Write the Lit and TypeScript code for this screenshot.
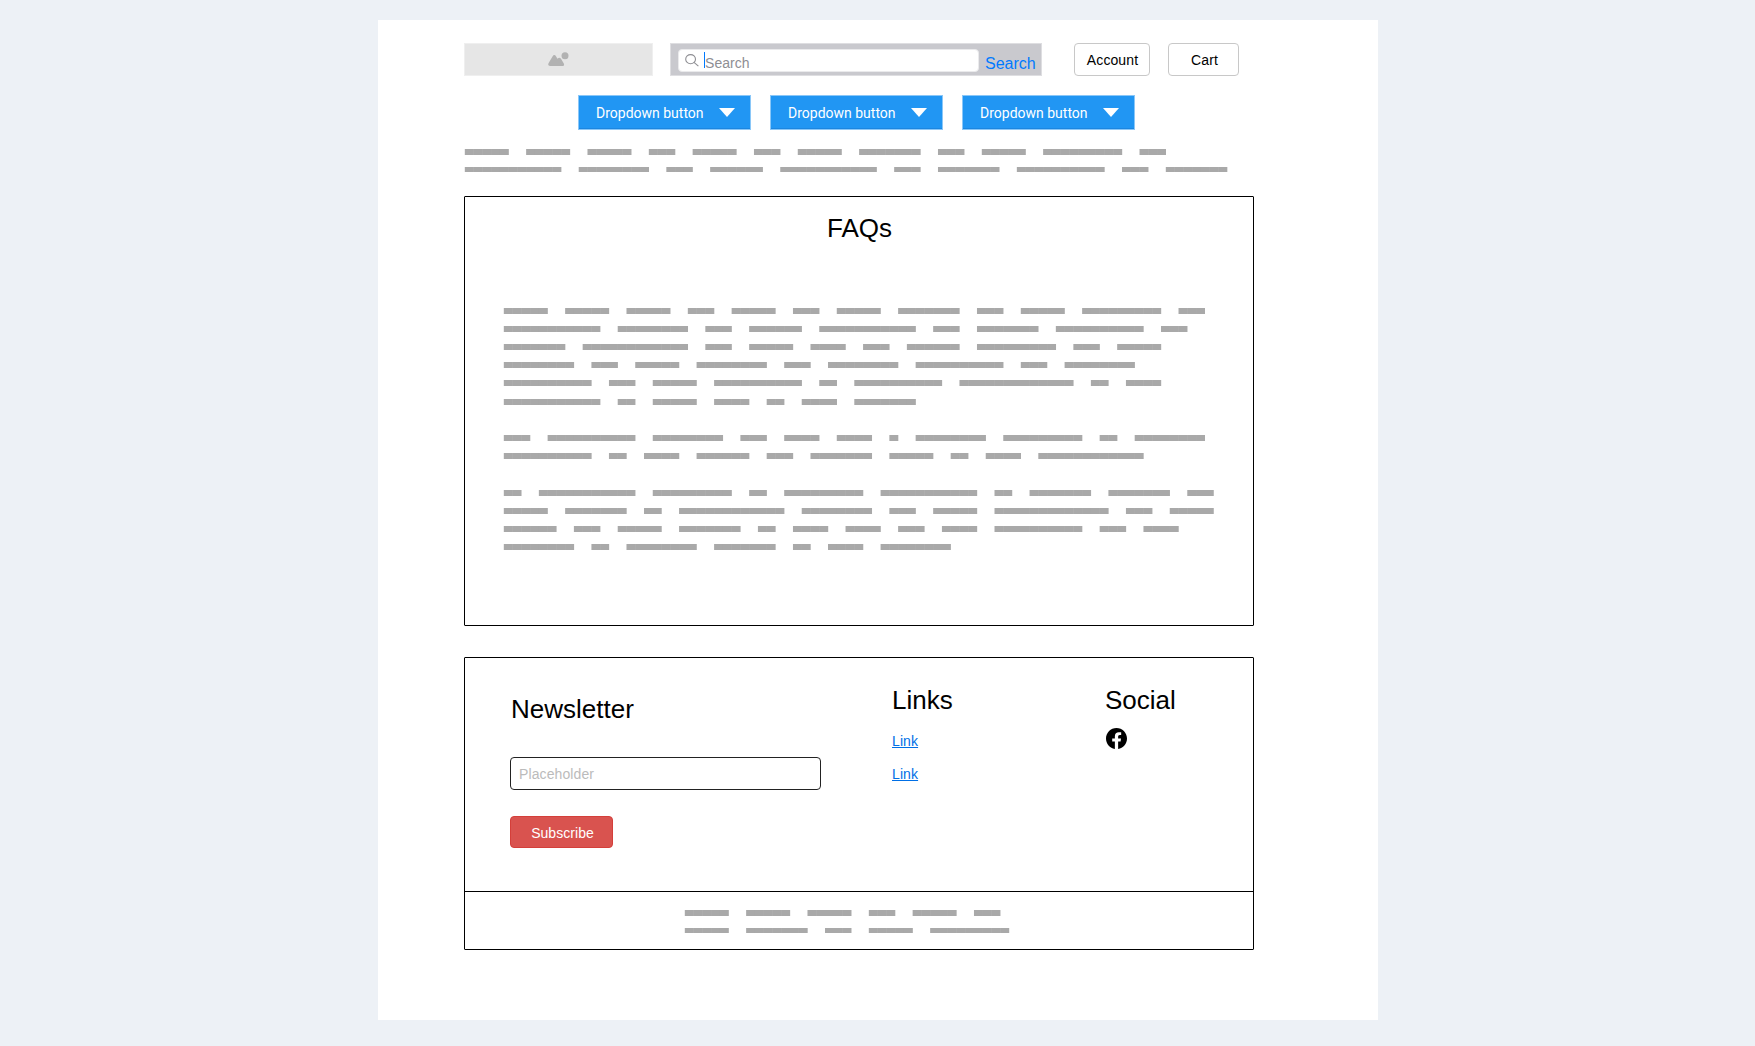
import { LitElement, html, svg, css } from "lit";
import { customElement, property } from "lit/decorators.js";

const CHAR = 8.7625;
const LINE = 18.2;

/** Word lengths, in characters, for every greeked line. */
const OPENING = [5, 5, 5, 3, 5, 3, 5, 7, 3, 5, 9, 3];

const INTRO = [OPENING, [11, 8, 3, 6, 11, 3, 7, 10, 3, 7]];

const FAQ = [
  OPENING,
  [11, 8, 3, 6, 11, 3, 7, 10, 3],
  [7, 12, 3, 5, 4, 3, 6, 9, 3, 5],
  [8, 3, 5, 8, 3, 8, 10, 3, 8],
  [10, 3, 5, 10, 2, 10, 13, 2, 4],
  [11, 2, 5, 4, 2, 4, 7],
  [],
  [3, 10, 8, 3, 4, 4, 1, 8, 9, 2, 8],
  [10, 2, 4, 6, 3, 7, 5, 2, 4, 12],
  [],
  [2, 11, 9, 2, 9, 11, 2, 7, 7, 3],
  [5, 7, 2, 12, 8, 3, 5, 13, 3, 5],
  [6, 3, 5, 7, 2, 4, 4, 3, 4, 10, 3, 4],
  [8, 2, 8, 7, 2, 4, 8],
];

const FOOTNOTE = [
  [5, 5, 5, 3, 5, 3],
  [5, 7, 3, 5, 9],
];

@customElement("greeked-text")
export class GreekedText extends LitElement {
  @property({ attribute: false }) lines: number[][] = [];
  @property({ type: Boolean }) short = false;

  static styles = css`
    :host {
      display: block;
    }
    svg {
      display: block;
      width: 100%;
      overflow: visible;
      fill: #a9a9a9;
    }
  `;

  render() {
    const rows = this.lines.map((words, row) => {
      const y = Math.floor(row * LINE);
      const h = this.short && row === this.lines.length - 1 ? 5 : 6;
      let column = 0;
      return words.map((length) => {
        const start = column;
        column += length + 2;
        return svg`
          <rect x=${start * CHAR + 1} y=${y} width=${length * CHAR - 2} height=${h} opacity="0.65"></rect>
          ${Array.from(
            { length },
            (_, i) => svg`<rect x=${(start + i) * CHAR - 0.2} y=${y} width=${CHAR + 0.2} height=${h}></rect>`
          )}`;
      });
    });
    return html`<svg height=${Math.floor(this.lines.length * LINE)} aria-hidden="true">${rows}</svg>`;
  }
}

@customElement("app-root")
export class AppRoot extends LitElement {
  static styles = css`
    :host {
      display: block;
      box-sizing: border-box;
      height: 1046px;
      padding: 20px 0 0 378px;
      background: #edf1f6;
      color: #000;
      font-family: "Liberation Sans", Arial, sans-serif;
      font-size: 14px;
    }
    * {
      box-sizing: border-box;
    }
    .sheet {
      width: 1000px;
      height: 1000px;
      padding: 23px 124px 0 86px;
      background: #fff;
    }
    .header {
      display: flex;
      height: 33px;
    }
    .logo {
      width: 189px;
      margin-right: 17px;
      padding: 8px 0 0 83px;
      background: #e6e6e6;
      border: 1px solid #efefef;
    }
    .logo svg,
    .glass,
    .facebook {
      display: block;
    }
    .search {
      display: flex;
      width: 372px;
      margin-right: 32px;
      padding: 5px 0 0 7px;
      background: #c9c9ce;
      border: 1px solid #dedee1;
    }
    .field {
      display: flex;
      width: 301px;
      height: 23px;
      padding: 3px 0 0 6px;
      background: #fff;
      border: 1px solid #eaeaec;
      border-radius: 4px;
      color: #8e8e93;
    }
    .glass {
      margin-top: 1px;
    }
    .caret {
      width: 1px;
      height: 16px;
      margin: -1px 0 0 5px;
      background: #007aff;
    }
    .hint {
      line-height: 16px;
      padding-top: 2px;
      letter-spacing: 0.05px;
    }
    .go {
      padding: 5px 0 0 6px;
      color: #007aff;
      font-size: 16px;
      line-height: 20px;
    }
    .button {
      width: 76px;
      margin-right: 18px;
      padding-left: 1px;
      border: 1px solid #c8c8c8;
      border-radius: 4px;
      letter-spacing: 0.1px;
      line-height: 32px;
      text-align: center;
    }
    .cart {
      width: 71px;
      margin-right: 0;
      padding-left: 2px;
    }
    .menus {
      display: flex;
      gap: 19px;
      margin: 19px 0 19px 114px;
    }
    .menu {
      display: flex;
      align-items: center;
      width: 173px;
      height: 35px;
      padding: 0 15.5px 0 17px;
      justify-content: space-between;
      background: #2196f3;
      border: 1px solid #8ac7f8;
      box-shadow: inset 0 -1px 0 #1c86e0;
      color: #fff;
      font-family: Roboto, sans-serif;
    }
    .intro {
      height: 47px;
      margin-left: 1px;
    }
    .card {
      border: 1px solid #000;
      border-radius: 1px;
    }
    .faqs {
      height: 430px;
      margin-bottom: 31px;
      padding: 15px 0 0 39px;
    }
    .title {
      margin: 0;
      font-size: 26px;
      font-weight: 400;
      line-height: 32px;
    }
    .faqs .title {
      margin: 0 0 64px -38px;
      text-align: center;
    }
    .footer {
      height: 293px;
    }
    .columns {
      display: flex;
      height: 234px;
      border-bottom: 1px solid #000;
      padding-left: 45px;
    }
    .newsletter {
      width: 382px;
      padding-top: 35px;
    }
    .newsletter .title {
      margin-left: 1px;
    }
    .input {
      width: 311px;
      height: 33px;
      margin: 32px 0 26px;
      padding-left: 8px;
      border: 1px solid #222;
      border-radius: 4px;
      color: #bbb;
      letter-spacing: 0.1px;
      line-height: 32px;
    }
    .subscribe {
      width: 103px;
      height: 32px;
      padding-left: 2px;
      border: 1px solid #d43f3a;
      border-radius: 4px;
      background: #d9534f;
      color: #fff;
      letter-spacing: 0.05px;
      text-align: center;
      line-height: 32px;
    }
    .links {
      width: 213px;
      padding-top: 26px;
    }
    .link {
      display: block;
      width: max-content;
      margin-top: 17px;
      color: #006fe6;
      letter-spacing: 0.1px;
      line-height: 16px;
    }
    .social {
      padding-top: 26px;
    }
    .facebook {
      margin: 12px 0 0 1px;
    }
    .footnote {
      margin: 18px 0 0 220px;
    }
  `;

  private menu() {
    return html`<div class="menu">
      <span>Dropdown button</span>
      <svg width="16" height="9" viewBox="0 0 16 9"><path fill="#fff" d="M0 0H16L8 9Z" /></svg>
    </div>`;
  }

  render() {
    return html`
      <main class="sheet">
        <header class="header">
          <div class="logo">
            <svg width="21" height="15" viewBox="0 0 21 15" fill="#b2b2b2">
              <path d="M.5 11.2 4.5 4.4Q6.3 1.7 8.1 4.4L9.5 6.8Q11.3 4.7 13 6.8L15.8 11.4Q16.8 14 14.6 14H2Q-.5 14 .5 11.2Z" />
              <circle cx="17" cy="3.8" r="3.5" />
            </svg>
          </div>
          <div class="search">
            <div class="field">
              <svg class="glass" width="14" height="13" viewBox="0 0 14 13" fill="none" stroke="#8e8e93" stroke-width="1.1">
                <ellipse cx="5.6" cy="5.2" rx="4.9" ry="4.6" />
                <path d="M9 8.4 13.4 12.2" />
              </svg>
              <span class="caret"></span><span class="hint">Search</span>
            </div>
            <span class="go">Search</span>
          </div>
          <div class="button">Account</div>
          <div class="button cart">Cart</div>
        </header>
        <nav class="menus">${this.menu()}${this.menu()}${this.menu()}</nav>
        <greeked-text class="intro" short .lines=${INTRO}></greeked-text>
        <section class="card faqs">
          <h1 class="title">FAQs</h1>
          <greeked-text .lines=${FAQ}></greeked-text>
        </section>
        <footer class="card footer">
          <div class="columns">
            <div class="newsletter">
              <h2 class="title">Newsletter</h2>
              <div class="input">Placeholder</div>
              <div class="subscribe">Subscribe</div>
            </div>
            <div class="links">
              <h2 class="title">Links</h2>
              <a class="link" href="#">Link</a>
              <a class="link" href="#">Link</a>
            </div>
            <div class="social">
              <h2 class="title">Social</h2>
              <svg class="facebook" width="21" height="21" viewBox="0 0 24 24">
                <path d="M24 12.07C24 5.4 18.63 0 12 0S0 5.4 0 12.07C0 18.1 4.39 23.1 10.13 24v-8.44H7.08v-3.49h3.05V9.41c0-3.02 1.79-4.69 4.53-4.69 1.31 0 2.68.24 2.68.24v2.97h-1.51c-1.49 0-1.96.93-1.96 1.89v2.25h3.33l-.53 3.49h-2.8V24C19.61 23.1 24 18.1 24 12.07Z" />
              </svg>
            </div>
          </div>
          <greeked-text class="footnote" short .lines=${FOOTNOTE}></greeked-text>
        </footer>
      </main>
    `;
  }
}
